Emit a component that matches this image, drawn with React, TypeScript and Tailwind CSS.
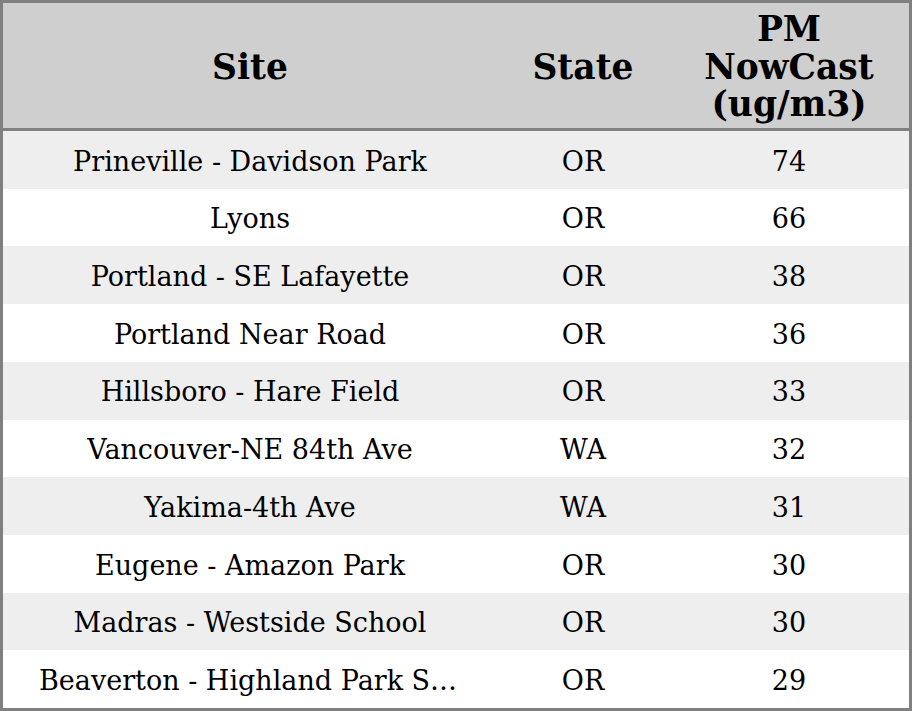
const rows: [string, string, number][] = [
  ['Prineville - Davidson Park', 'OR', 74],
  ['Lyons', 'OR', 66],
  ['Portland - SE Lafayette', 'OR', 38],
  ['Portland Near Road', 'OR', 36],
  ['Hillsboro - Hare Field', 'OR', 33],
  ['Vancouver-NE 84th Ave', 'WA', 32],
  ['Yakima-4th Ave', 'WA', 31],
  ['Eugene - Amazon Park', 'OR', 30],
  ['Madras - Westside School', 'OR', 30],
  ['Beaverton - Highland Park School', 'OR', 29]
]

export default function App() {
  return (
    <div className="flex h-[711px] w-[912px] flex-col border-[3px] border-[#808080] bg-white font-['DejaVu_Serif',serif] text-black">
      <div className="grid h-[128px] shrink-0 grid-cols-[494px_172px_1fr] items-center border-b-[3px] border-[#808080] bg-[#cfcfcf] pt-1 text-center text-[34.5px] font-bold leading-[37.5px]">
        <div>Site</div>
        <div>State</div>
        <div>
          PM
          <br />
          NowCast
          <br />
          (ug/m3)
        </div>
      </div>
      <div className="flex min-h-0 flex-1 flex-col">
        {rows.map(([site, state, value], i) => (
          <div
            key={site}
            className={`grid flex-1 grid-cols-[494px_172px_1fr] items-center pt-1 text-center text-[27px] ${
              i % 2 === 0 ? 'bg-[#eeeeee]' : 'bg-white'
            }`}
          >
            <div className="truncate px-9" title={site}>{site}</div>
            <div>{state}</div>
            <div>{value}</div>
          </div>
        ))}
      </div>
    </div>
  )
}
